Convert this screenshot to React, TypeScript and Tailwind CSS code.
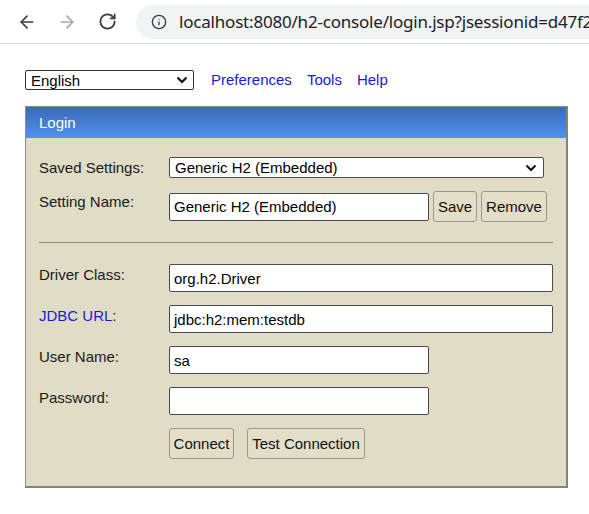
import React from "react";
import { ArrowLeft, ArrowRight, RotateCw, Info } from "lucide-react";

const Chevron = () => (
  <svg width="12" height="8" viewBox="0 0 12 8" className="shrink-0">
    <path d="M1.5 1.5 L6 6 L10.5 1.5" fill="none" stroke="#111" strokeWidth="2.2" />
  </svg>
);

const Label = ({ children, blue }: { children: React.ReactNode; blue?: boolean }) => (
  <div className="w-[130px] shrink-0 pt-[2px] leading-[17px]">
    {blue ? (
      <>
        <span className="text-[#1a1ad8]">JDBC URL</span>:
      </>
    ) : (
      children
    )}
  </div>
);

const Input = ({ value, w }: { value: string; w: string }) => (
  <div
    className={`${w} h-[28px] bg-white border border-[#4a4a4a] rounded-[2px] flex items-center pl-[4px] pt-[2px] text-black`}
  >
    {value}
  </div>
);

const Btn = ({ children, w }: { children: React.ReactNode; w: string }) => (
  <div
    className={`${w} h-[31px] border border-[#9b998b] rounded-[3px] bg-[#e2dec8] flex items-center justify-center pt-[1px] text-[#111]`}
  >
    {children}
  </div>
);

export default function App() {
  return (
    <div className="w-[589px] h-[514px] bg-white overflow-hidden font-['Liberation_Sans',Arial,sans-serif] text-[15px] text-[#1a1a1a]">
      {/* Browser chrome */}
      <div className="h-[44px] border-b border-[#dadce0] flex items-center">
        <div className="w-[54px] flex justify-center">
          <ArrowLeft size={20} strokeWidth={2} color="#3c3c3c" />
        </div>
        <div className="w-[26px] flex justify-center">
          <ArrowRight size={20} strokeWidth={2} color="#a6a6a6" />
        </div>
        <div className="w-[54px] flex justify-center">
          <RotateCw size={19} strokeWidth={2.3} color="#3c3c3c" />
        </div>
        <div className="flex-1 h-[34px] ml-[2px] bg-[#f1f3f4] rounded-l-full flex items-center pl-[15px] overflow-hidden whitespace-nowrap">
          <Info size={16} strokeWidth={2} color="#3c3c3c" className="shrink-0" />
          <span className="ml-[12px] text-[17px] text-[#202124] font-['Noto_Sans',sans-serif] tracking-[-0.2px]">
            localhost:8080/h2-console/login.jsp?jsessionid=d47f2
          </span>
        </div>
      </div>

      <div className="pl-[25px]">
        {/* Top bar */}
        <div className="mt-[26px] flex items-center h-[20px]">
          <div className="w-[169px] h-[20px] border border-[#333] rounded-[2px] flex items-center justify-between pl-[5px] pr-[5px] text-black">
            <span className="leading-[17px]">English</span>
            <Chevron />
          </div>
          <a className="ml-[17px] text-[#1a1ad8]">Preferences</a>
          <a className="ml-[15px] text-[#1a1ad8]">Tools</a>
          <a className="ml-[15px] text-[#1a1ad8]">Help</a>
        </div>

        {/* Panel */}
        <div className="mt-[16px] w-[543px] border-l border-t border-l-[#8e8c7e] border-t-[#8e8c7e] border-r-2 border-b-2 border-r-[#858372] border-b-[#858372] bg-[#e0dcc5]">
          <div className="h-[31px] bg-linear-to-b from-[#3a69b9] to-[#5193ea] text-white flex items-center pl-[13px] pt-[1px]">
            Login
          </div>
          <div className="pl-[13px] pr-[13px] pt-[19px] pb-[27px]">
            {/* Saved Settings */}
            <div className="flex items-center h-[21px]">
              <div className="w-[130px] shrink-0 pt-[2px]">Saved Settings:</div>
              <div className="w-[375px] h-[21px] bg-white border border-[#4a4a4a] rounded-[2px] flex items-center justify-between pl-[5px] pr-[6px] text-black">
                <span className="pt-[2px]">Generic H2 (Embedded)</span>
                <Chevron />
              </div>
            </div>
            {/* Setting Name */}
            <div className="flex mt-[13px] h-[31px]">
              <Label>Setting Name:</Label>
              <div className="flex items-center gap-[4px]">
                <Input value="Generic H2 (Embedded)" w="w-[260px]" />
                <Btn w="w-[44px]">Save</Btn>
                <Btn w="w-[66px]">Remove</Btn>
              </div>
            </div>
            <div className="mt-[20px] h-[1px] bg-[#8d8b7d]" />
            <div className="flex mt-[21px]">
              <Label>Driver Class:</Label>
              <Input value="org.h2.Driver" w="w-[384px]" />
            </div>
            <div className="flex mt-[13px]">
              <Label blue>JDBC URL:</Label>
              <Input value="jdbc:h2:mem:testdb" w="w-[384px]" />
            </div>
            <div className="flex mt-[13px]">
              <Label>User Name:</Label>
              <Input value="sa" w="w-[260px]" />
            </div>
            <div className="flex mt-[13px]">
              <Label>Password:</Label>
              <Input value="" w="w-[260px]" />
            </div>
            <div className="flex mt-[13px]">
              <div className="w-[130px] shrink-0" />
              <div className="flex gap-[13px]">
                <Btn w="w-[65px]">Connect</Btn>
                <Btn w="w-[118px]">Test Connection</Btn>
              </div>
            </div>
          </div>
        </div>
      </div>
    </div>
  );
}
